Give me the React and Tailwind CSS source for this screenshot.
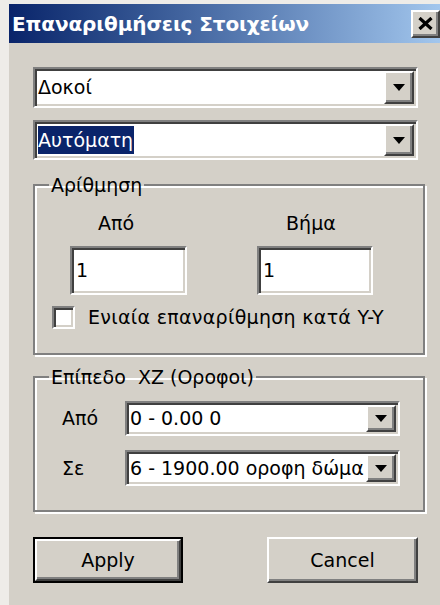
const sunken = 'border-2 border-t-[#808080] border-l-[#808080] border-b-white border-r-white shadow-[inset_2px_2px_0_#404040,inset_-2px_-2px_0_#d4d0c8] bg-white'
const raised = 'border-2 border-t-white border-l-white border-b-[#404040] border-r-[#404040] shadow-[inset_-2px_-2px_0_#808080] bg-[#d4d0c8]'
const etched = 'border-2 border-[#808080] shadow-[inset_2px_2px_0_#fff,2px_2px_0_#fff]'

function Arrow() {
  return (
    <svg width="12" height="7" viewBox="0 0 12 7">
      <path d="M0 0h12L6 7z" fill="#000" />
    </svg>
  )
}

function Combo({ value, selected, className }) {
  return (
    <div className={`${sunken} flex items-stretch p-[2px] ${className}`}>
      <div className="flex-1 flex items-center pl-[1px] overflow-hidden whitespace-nowrap">
        <span className={selected ? 'bg-[#0a246a] text-white pr-[1px]' : ''}>{value}</span>
      </div>
      <div className={`${raised} w-[30px] flex items-center justify-center`}>
        <Arrow />
      </div>
    </div>
  )
}

function Field({ value, className }) {
  return (
    <div className={`${sunken} h-[49px] flex items-center pl-[4px] ${className}`}>
      {value}
    </div>
  )
}

export default function App() {
  return (
    <div className="min-h-screen bg-[#eeece8] pt-[4px] pl-[9px] overflow-hidden text-[19px] text-black font-['DejaVu_Sans',sans-serif]">
      <div className="w-[440px] h-[620px] bg-[#d4d0c8]">
        {/* caption */}
        <div className="h-[39px] flex items-center pl-[3px] pr-[9px] bg-gradient-to-r from-[#0a246a] to-[#a6caf0]">
          <span className="text-white font-bold text-[20px] tracking-[-0.1px]">Επαναριθμήσεις Στοιχείων</span>
          <div className={`${raised} ml-auto w-[29px] h-[28px] flex items-center justify-center`}>
            <svg width="15" height="13" viewBox="0 0 15 13">
              <path d="M1.5 1l12 11M13.5 1l-12 11" stroke="#000" strokeWidth="3.2" />
            </svg>
          </div>
        </div>

        <div className="pl-[24px] pt-[24px]">
          <Combo value="Δοκοί" className="w-[385px] h-[41px]" />
          <Combo value="Αυτόματη" selected className="w-[385px] h-[40px] mt-[12px]" />

          {/* numbering group */}
          <fieldset className={`${etched} w-[392px] h-[181px] mt-[14px]`}>
            <legend className="ml-[14px] px-[2px] leading-[22px]">Αρίθμηση</legend>
            <div className="flex mt-[16px] leading-[22px]">
              <span className="ml-[63px]">Από</span>
              <span className="ml-[152px]">Βήμα</span>
            </div>
            <div className="flex mt-[12px]">
              <Field value="1" className="ml-[35px] w-[117px]" />
              <Field value="1" className="ml-[70px] w-[116px]" />
            </div>
            <div className="flex items-center mt-[8px]">
              <div className={`${sunken} ml-[17px] w-[23px] h-[23px]`} />
              <span className="ml-[13px] tracking-[0.3px]">Ενιαία επαναρίθμηση κατά Y-Y</span>
            </div>
          </fieldset>

          {/* floor level group */}
          <fieldset className={`${etched} w-[392px] h-[146px] mt-[11px]`}>
            <legend className="ml-[14px] px-[2px] leading-[22px]">Επίπεδο&nbsp; XZ (Οροφοι)</legend>
            <div className="flex items-center mt-[13px]">
              <span className="ml-[27px] w-[63px]">Από</span>
              <Combo value="0 - 0.00 0" className="w-[275px] h-[35px]" />
            </div>
            <div className="flex items-center mt-[14px]">
              <span className="ml-[27px] w-[63px]">Σε</span>
              <Combo value="6 - 1900.00 οροφη δώμα" className="w-[275px] h-[36px]" />
            </div>
          </fieldset>

          <div className="flex mt-[25px]">
            <div className="w-[150px] h-[46px] border-2 border-black">
              <div className={`${raised} h-full flex items-center justify-center`}>Apply</div>
            </div>
            <div className={`${raised} ml-[84px] w-[151px] h-[46px] flex items-center justify-center`}>Cancel</div>
          </div>
        </div>
      </div>
    </div>
  )
}
